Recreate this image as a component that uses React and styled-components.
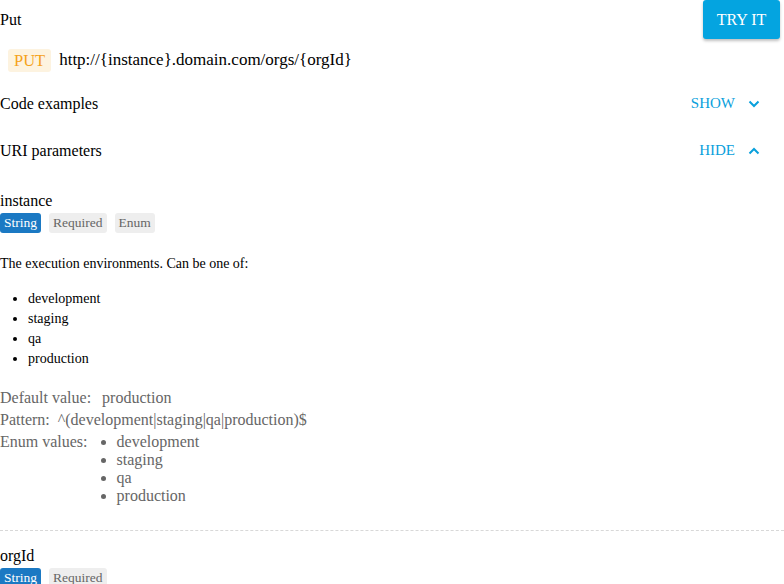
import React from "react";
import styled, { createGlobalStyle } from "styled-components";

const Global = createGlobalStyle`
  html, body { margin: 0; padding: 0; background: #fff; }
  body { font-family: "Liberation Serif", "Times New Roman", serif; color: #000; overflow: hidden; }
  button { font-family: "Liberation Serif", "Times New Roman", serif; }
`;

const serif = `"Liberation Serif", "Times New Roman", serif`;

const Page = styled.div`
  width: 784px;
  display: flex;
  flex-direction: column;
  font-family: ${serif};
`;

const TopRow = styled.div`
  display: flex;
  justify-content: space-between;
  align-items: flex-start;
  height: 40px;
  padding-right: 4px;
`;

const Title = styled.div`
  font-size: 16px;
  line-height: 18px;
  padding-top: 11px;
`;

const TryButton = styled.button`
  width: 77px;
  height: 39px;
  border: none;
  border-radius: 3px;
  background: #04a4e0;
  color: #fff;
  font-family: ${serif};
  font-size: 16px;
  box-shadow: 0 2px 3px rgba(0, 0, 0, 0.25);
  padding: 0;
`;

const UrlRow = styled.div`
  display: flex;
  align-items: center;
  gap: 8px;
  padding: 8px 0 0 8px;
  height: 24px;
`;

const Method = styled.span`
  background: #fdf3e0;
  color: #f5a21b;
  font-family: ${serif};
  font-size: 16.5px;
  line-height: 23px;
  padding: 0 6px;
  border-radius: 3px;
`;

const Url = styled.span`
  font-family: ${serif};
  font-size: 17px;
`;

const SectionRow = styled.div`
  display: flex;
  justify-content: space-between;
  align-items: center;
  height: 47px;
  font-size: 16px;
  padding-right: 24px;
  margin-top: ${(p) => p.$top || 0}px;
`;

const Toggle = styled.span`
  display: flex;
  align-items: center;
  gap: 13px;
  color: #0aa0dc;
  font-family: ${serif};
  font-size: 15px;
`;

const Param = styled.div`
  display: flex;
  flex-direction: column;
  padding-top: ${(p) => p.$top}px;
`;

const ParamName = styled.div`
  font-size: 16px;
  line-height: 18px;
`;

const Badges = styled.div`
  display: flex;
  gap: 8px;
  margin-top: 3px;
`;

const Badge = styled.span`
  font-family: ${serif};
  font-size: 13.5px;
  line-height: 20px;
  padding: 0 4px;
  border-radius: 3px;
  background: ${(p) => (p.$primary ? "#1b79c3" : "#eeeeee")};
  color: ${(p) => (p.$primary ? "#fff" : "#666")};
`;

const Desc = styled.p`
  font-size: 14px;
  margin: 22px 0 0;
  line-height: 18px;
`;

const List = styled.ul`
  margin: 16px 0 0;
  padding-left: 28px;
  font-size: 14px;
  line-height: 20px;
`;

const MetaRow = styled.div`
  display: flex;
  align-items: flex-start;
  gap: ${(p) => p.$gap}px;
  color: #666;
  font-size: 16px;
  line-height: 22px;
  margin-top: ${(p) => p.$top || 0}px;
`;

const EnumList = styled.ul`
  margin: 0;
  padding-left: 19px;
  line-height: 18px;
  padding-top: 2px;
`;

const Divider = styled.hr`
  border: none;
  border-top: 1px dashed #d8d8d8;
  margin: 25px 0 0;
  width: 100%;
`;

const Chevron = ({ up }) => (
  <svg width="12" height="8" viewBox="0 0 12 8" fill="none">
    <path
      d={up ? "M1.5 6.5 L6 2 L10.5 6.5" : "M1.5 1.5 L6 6 L10.5 1.5"}
      stroke="#0aa0dc"
      strokeWidth="2"
    />
  </svg>
);

export default function App() {
  return (
    <Page>
      <Global />
      <TopRow>
        <Title>Put</Title>
        <TryButton>TRY IT</TryButton>
      </TopRow>
      <UrlRow>
        <Method>PUT</Method>
        <Url>http://{"{"}instance{"}"}.domain.com/orgs/{"{"}orgId{"}"}</Url>
      </UrlRow>
      <SectionRow $top={8}>
        <span>Code examples</span>
        <Toggle>SHOW <Chevron /></Toggle>
      </SectionRow>
      <SectionRow>
        <span>URI parameters</span>
        <Toggle>HIDE <Chevron up /></Toggle>
      </SectionRow>
      <Param $top={18}>
        <ParamName>instance</ParamName>
        <Badges>
          <Badge $primary>String</Badge>
          <Badge>Required</Badge>
          <Badge>Enum</Badge>
        </Badges>
        <Desc>The execution environments. Can be one of:</Desc>
        <List>
          <li>development</li>
          <li>staging</li>
          <li>qa</li>
          <li>production</li>
        </List>
        <MetaRow $top={18} $gap={11}>
          <span>Default value:</span>
          <span>production</span>
        </MetaRow>
        <MetaRow $gap={8}>
          <span>Pattern:</span>
          <span>^(development|staging|qa|production)$</span>
        </MetaRow>
        <MetaRow $gap={10}>
          <span>Enum values:</span>
          <EnumList>
            <li>development</li>
            <li>staging</li>
            <li>qa</li>
            <li>production</li>
          </EnumList>
        </MetaRow>
      </Param>
      <Divider />
      <Param $top={16}>
        <ParamName>orgId</ParamName>
        <Badges>
          <Badge $primary>String</Badge>
          <Badge>Required</Badge>
        </Badges>
      </Param>
    </Page>
  );
}
